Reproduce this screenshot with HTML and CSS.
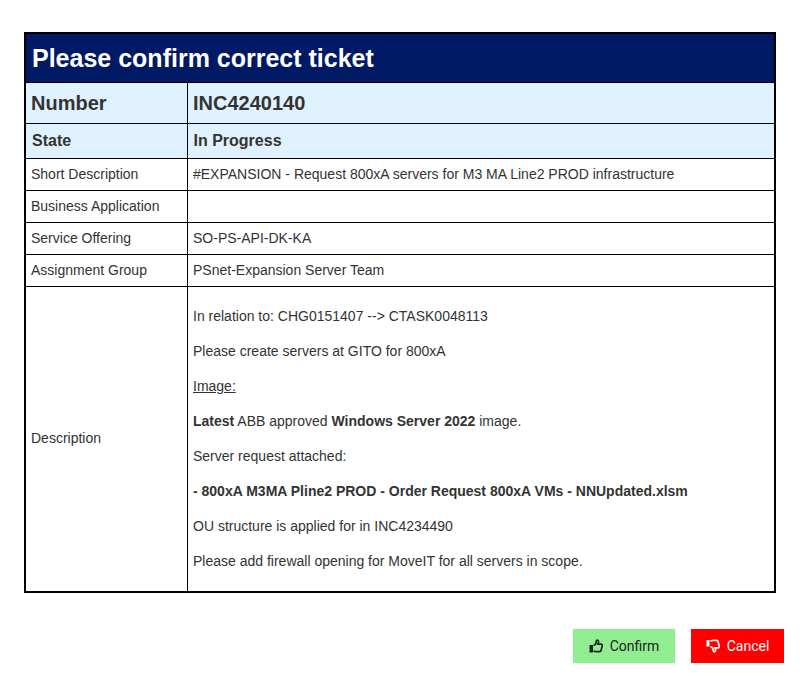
FILE: index.html
```html
<!DOCTYPE html>
<html lang="en">
<head>
  <meta charset="UTF-8">
  <title>Confirm ticket</title>
  <link rel="stylesheet" href="styles.css">
</head>
<body>

  <table class="ticket">
    <colgroup>
      <col class="col-label">
      <col>
    </colgroup>
    <thead>
      <tr>
        <th colspan="2" class="title">Please confirm correct ticket</th>
      </tr>
    </thead>
    <tbody>
      <tr class="row-number">
        <td>Number</td>
        <td>INC4240140</td>
      </tr>
      <tr class="row-state">
        <td>State</td>
        <td>In Progress</td>
      </tr>
      <tr>
        <td>Short Description</td>
        <td>#EXPANSION - Request 800xA servers for M3 MA Line2 PROD infrastructure</td>
      </tr>
      <tr>
        <td>Business Application</td>
        <td></td>
      </tr>
      <tr>
        <td>Service Offering</td>
        <td>SO-PS-API-DK-KA</td>
      </tr>
      <tr>
        <td>Assignment Group</td>
        <td>PSnet-Expansion Server Team</td>
      </tr>
      <tr class="row-desc">
        <td>Description</td>
        <td>
          <p>In relation to: CHG0151407 --&gt; CTASK0048113</p>
          <p>Please create servers at GITO for 800xA</p>
          <p><u>Image:</u></p>
          <p><b>Latest</b> ABB approved <b>Windows Server 2022</b> image.</p>
          <p>Server request attached:</p>
          <p><b>- 800xA M3MA Pline2 PROD - Order Request 800xA VMs - NNUpdated.xlsm</b></p>
          <p>OU structure is applied for in INC4234490</p>
          <p>Please add firewall opening for MoveIT for all servers in scope.</p>
        </td>
      </tr>
    </tbody>
  </table>

  <div class="actions">
    <button type="button" class="btn confirm-btn">
      <svg class="icon" viewBox="0 0 14 14" width="14" height="14">
        <rect x="0.5" y="6" width="3.5" height="7.5" fill="currentColor"/>
        <path d="M4.5 6.5 C6 6 7 4.5 7.2 2.6 C7.3 1.4 8 1 8.7 1.3 C9.7 1.8 9.6 3.6 8.9 5.2 L12 5.2 C13 5.2 13.5 6 13.2 6.9 L12 11.6 C11.8 12.3 11.3 12.6 10.6 12.6 L7 12.6 C6 12.6 5.3 12.2 4.5 11.8" fill="none" stroke="currentColor" stroke-width="1.7"/>
      </svg>
      Confirm
    </button>
    <button type="button" class="btn cancel-btn">
      <svg class="icon" viewBox="0 0 14 14" width="14" height="14">
        <rect x="0.5" y="1" width="3" height="6.5" fill="currentColor"/>
        <path d="M4.5 7.5 C6 8 7 9.5 7.2 11.4 C7.3 12.6 8 13 8.7 12.7 C9.7 12.2 9.6 10.4 8.9 8.8 L12 8.8 C13 8.8 13.5 8 13.2 7.1 L12 2.4 C11.8 1.7 11.3 1.4 10.6 1.4 L7 1.4 C6 1.4 5.3 1.8 4.5 2.2" fill="none" stroke="currentColor" stroke-width="1.7"/>
      </svg>
      Cancel
    </button>
  </div>

</body>
</html>
```

FILE: styles.css
```css
body {
  margin: 0;
  padding: 32px 16px 0 24px;
  font-family: "Liberation Sans", Arial, sans-serif;
  font-size: 14px;
  color: #333;
  background: #fff;
}

.ticket {
  width: 752px;
  border-collapse: collapse;
  border: 2px solid #000;
  table-layout: fixed;
}

.col-label {
  width: 162px;
}

.ticket td {
  border: 1px solid #000;
  padding: 0 5px 2px;
  height: 29px;
}

.ticket td + td {
  padding-left: 5.5px;
}

.title {
  background: #001965;
  color: #fff;
  font-size: 25px;
  font-weight: bold;
  text-align: left;
  padding: 0 6px;
  height: 48px;
}

.ticket .row-number td {
  background: #e0f2ff;
  font-size: 20px;
  font-weight: bold;
  height: 40px;
  padding-bottom: 0;
}

.ticket .row-state td {
  background: #e0f2ff;
  font-size: 16px;
  font-weight: bold;
  height: 34px;
  padding-bottom: 0;
  padding-left: 6px;
}

.ticket .row-desc td {
  padding-top: 1px;
  padding-bottom: 4px;
}

.ticket .row-desc td + td {
  padding-bottom: 2px;
}

.row-desc p {
  margin: 21px 0;
  line-height: 14px;
}

.actions {
  display: flex;
  justify-content: flex-end;
  gap: 16px;
  margin-top: 36px;
}

.btn {
  display: flex;
  align-items: center;
  justify-content: center;
  gap: 7px;
  height: 34px;
  border: none;
  font-family: Roboto, sans-serif;
  font-size: 14px;
  cursor: pointer;
}

.confirm-btn {
  width: 102px;
  background: #90ee90;
  color: #222;
}

.cancel-btn {
  width: 93px;
  background: #f00;
  color: #fff;
}
```
